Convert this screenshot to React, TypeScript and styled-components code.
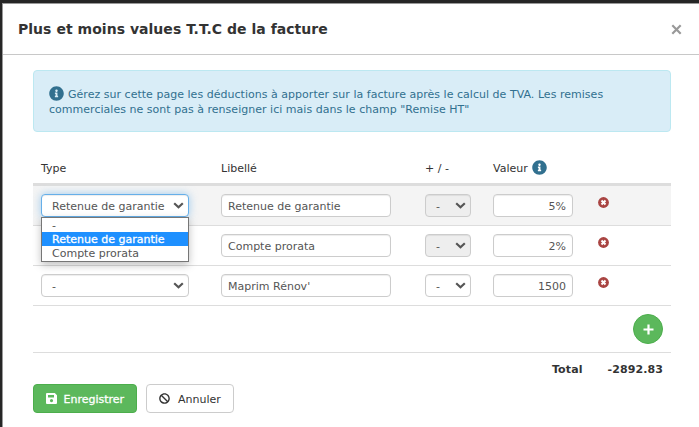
import React from "react";
import styled, { createGlobalStyle, css } from "styled-components";
import { FaBan, FaInfoCircle } from "react-icons/fa";

const GlobalStyle = createGlobalStyle`
  * { box-sizing: border-box; }
  body {
    margin: 0;
    background: #262626;
    color: #333;
    font: 11px/15px Verdana, "DejaVu Sans", sans-serif;
    overflow: hidden;
  }
`;

const Modal = styled.div`
  margin: 3px 0 0 2px;
  height: 424px;
  background: #fff;
  border: solid #999;
  border-width: 1px 0 0 1px;
`;

const Header = styled.header`
  display: flex;
  align-items: center;
  justify-content: space-between;
  height: 51px;
  padding: 0 17px 0 15px;
  border-bottom: 1px solid #c8c8c8;
`;

const Title = styled.h1`
  margin: 0;
  font-size: 14px;
  line-height: 20px;
  letter-spacing: 0.03px;
`;

const Close = styled.svg`
  display: block;
  width: 11px;
  height: 11px;
  stroke: #999;
  stroke-width: 2.2;
`;

const Body = styled.main`
  width: 638px;
  margin: 15px 0 0 30px;
`;

const Alert = styled.div`
  height: 62px;
  padding: 16px 15px 14px;
  color: #31708f;
  background: #d9edf7;
  border: 1px solid #bce8f1;
  border-radius: 4px;
`;

const Line = styled.div`
  display: flex;
  align-items: center;
  height: 15px;
  white-space: pre;
  letter-spacing: 0.025px;
`;

const InfoIcon = styled(FaInfoCircle)`
  flex: none;
  width: 15px;
  height: 15px;
  margin: -2px 4px 0 0;
  color: #31708f;
`;

const columns = css`
  display: grid;
  grid-template-columns: 180px 204px 68px 102px 68px;
  padding-left: 8px;
`;

const Head = styled.div`
  ${columns}
  align-items: start;
  height: 54px;
  padding-top: 29px;
  border-bottom: 3px solid #ddd;
`;

const HeadCell = styled.div`
  display: flex;
  align-items: center;
  gap: 4px;
  height: 15px;
`;

const Row = styled.div<{ $active?: boolean }>`
  ${columns}
  height: 40px;
  padding-top: 8px;
  background: ${(p) => (p.$active ? "#f4f4f4" : "#fff")};
  border-bottom: 1px solid #ddd;
`;

const control = css`
  height: 23px;
  border: 1px solid #ccc;
  border-radius: 4px;
  background: #fff;
  color: #555;
  line-height: 23px;
`;

const SelectBox = styled.div<{ $width: number; $disabled?: boolean; $focus?: boolean }>`
  ${control}
  position: relative;
  display: flex;
  align-items: flex-start;
  justify-content: space-between;
  width: ${(p) => p.$width}px;
  padding: 0 4px 0 10px;
  box-shadow: inset 0 1px 1px rgba(0, 0, 0, 0.075);
  ${(p) => p.$disabled && css`background: #eee;`}
  ${(p) =>
    p.$focus &&
    css`
      border-color: #66afe9;
      box-shadow: inset 0 1px 1px rgba(0, 0, 0, 0.075), 0 0 8px rgba(102, 175, 233, 0.6);
    `}
`;

const Chevron = styled.svg`
  width: 11px;
  height: 7px;
  margin-top: 7px;
  fill: none;
  stroke: #555;
  stroke-width: 2.2;
`;

const Field = styled.div<{ $width: number; $right?: boolean }>`
  ${control}
  width: ${(p) => p.$width}px;
  padding: 0 6px;
  text-align: ${(p) => (p.$right ? "right" : "left")};
  box-shadow: inset 0 1px 1px rgba(0, 0, 0, 0.075);
`;

const Menu = styled.div`
  position: absolute;
  z-index: 2;
  top: 22px;
  left: -1px;
  width: 148px;
  height: 45px;
  background: #fff;
  border: 1px solid #767676;
  box-shadow: 0 3px 8px rgba(0, 0, 0, 0.25);
`;

const Option = styled.div<{ $selected?: boolean }>`
  height: 14px;
  padding-left: 10px;
  line-height: 15px;
  ${(p) => p.$selected && css`color: #fff; background: #1e90ff; -webkit-text-stroke: 0.3px #fff;`}
`;

const Remove = styled.svg`
  width: 11px;
  height: 11px;
  margin: 2.5px 0 0 3px;
`;

const AddRow = styled.div`
  display: flex;
  align-items: center;
  justify-content: flex-end;
  height: 47px;
  padding-right: 8px;
  border-bottom: 1px solid #ddd;
`;

const AddButton = styled.div`
  display: grid;
  place-items: center;
  width: 30px;
  height: 30px;
  padding-top: 1px;
  border: 1px solid #4cae4c;
  border-radius: 50%;
  background: #5cb85c;
  color: #fff;
`;

const TotalRow = styled.div`
  display: flex;
  justify-content: flex-end;
  gap: 25px;
  height: 31px;
  padding: 9px 8px 0 0;
  font-weight: bold;
  letter-spacing: 0.1px;
`;

const Actions = styled.footer`
  display: flex;
  gap: 9px;
`;

const Button = styled.div<{ $primary?: boolean }>`
  display: flex;
  align-items: center;
  gap: ${(p) => (p.$primary ? 7 : 8)}px;
  width: ${(p) => (p.$primary ? 104 : 88)}px;
  height: 29px;
  padding-left: ${(p) => (p.$primary ? 11.5 : 12)}px;
  border: 1px solid ${(p) => (p.$primary ? "#4cae4c" : "#ccc")};
  border-radius: 4px;
  background: ${(p) => (p.$primary ? "#5cb85c" : "#fff")};
  color: ${(p) => (p.$primary ? "#fff" : "#333")};
  ${(p) => p.$primary && css`-webkit-text-stroke: 0.3px #fff;`}
`;

const ButtonLabel = styled.span`
  padding-top: 2px;
`;

const Arrow = () => (
  <Chevron viewBox="0 0 11 7">
    <path d="M1.2 1.2 5.5 5.2 9.8 1.2" />
  </Chevron>
);

const RemoveIcon = () => (
  <Remove viewBox="0 0 11 11">
    <circle cx="5.5" cy="5.5" r="5.4" fill="#a94442" />
    <path d="M3.5 3.5 7.5 7.5M7.5 3.5 3.5 7.5" stroke="#fff" strokeWidth="2" />
  </Remove>
);

const PlusIcon = () => (
  <svg width="11" height="11" viewBox="0 0 11 11" stroke="currentColor" strokeWidth="2.2">
    <path d="M5.5 .5v10M.5 5.5h10" />
  </svg>
);

const SaveIcon = () => (
  <svg width="11" height="11" viewBox="0 0 11 11" fill="currentColor">
    <path fillRule="evenodd" d="M1 0h7.8L11 2.2V10a1 1 0 0 1-1 1H1a1 1 0 0 1-1-1V1a1 1 0 0 1 1-1Zm1 2v2.4h6V2Zm3.5 4a1.6 1.6 0 1 0 0 3.2 1.6 1.6 0 0 0 0-3.2Z" />
  </svg>
);

const types = ["-", "Retenue de garantie", "Compte prorata"];

const rows = [
  { type: "Retenue de garantie", label: "Retenue de garantie", value: "5%", locked: true, open: true },
  { type: "", label: "Compte prorata", value: "2%", locked: true, open: false },
  { type: "-", label: "Maprim Rénov'", value: "1500", locked: false, open: false },
];

export default function App() {
  return (
    <>
      <GlobalStyle />
      <Modal>
        <Header>
          <Title>Plus et moins values T.T.C de la facture</Title>
          <Close viewBox="0 0 11 11">
            <path d="M1.3 1.3 9.7 9.7M9.7 1.3 1.3 9.7" />
          </Close>
        </Header>
        <Body>
          <Alert>
            <Line>
              <InfoIcon />
              Gérez sur cette page les déductions à apporter sur la facture après le calcul de TVA. Les remises
            </Line>
            <Line>commerciales ne sont pas à renseigner ici mais dans le champ "Remise HT"</Line>
          </Alert>
          <Head>
            <HeadCell>Type</HeadCell>
            <HeadCell>Libellé</HeadCell>
            <HeadCell>+ / -</HeadCell>
            <HeadCell>Valeur <InfoIcon /></HeadCell>
          </Head>
          {rows.map((row) => (
            <Row key={row.label} $active={row.open}>
              <SelectBox $width={148} $focus={row.open}>
                <span>{row.type}</span>
                <Arrow />
                {row.open && (
                  <Menu>
                    {types.map((t) => (
                      <Option key={t} $selected={t === row.type}>{t}</Option>
                    ))}
                  </Menu>
                )}
              </SelectBox>
              <Field $width={170}>{row.label}</Field>
              <SelectBox $width={46} $disabled={row.locked}>
                <span>-</span>
                <Arrow />
              </SelectBox>
              <Field $width={80} $right>{row.value}</Field>
              <RemoveIcon />
            </Row>
          ))}
          <AddRow>
            <AddButton><PlusIcon /></AddButton>
          </AddRow>
          <TotalRow>
            <span>Total</span>
            <span>-2892.83</span>
          </TotalRow>
          <Actions>
            <Button $primary><SaveIcon /><ButtonLabel>Enregistrer</ButtonLabel></Button>
            <Button><FaBan size={11} /><ButtonLabel>Annuler</ButtonLabel></Button>
          </Actions>
        </Body>
      </Modal>
    </>
  );
}
